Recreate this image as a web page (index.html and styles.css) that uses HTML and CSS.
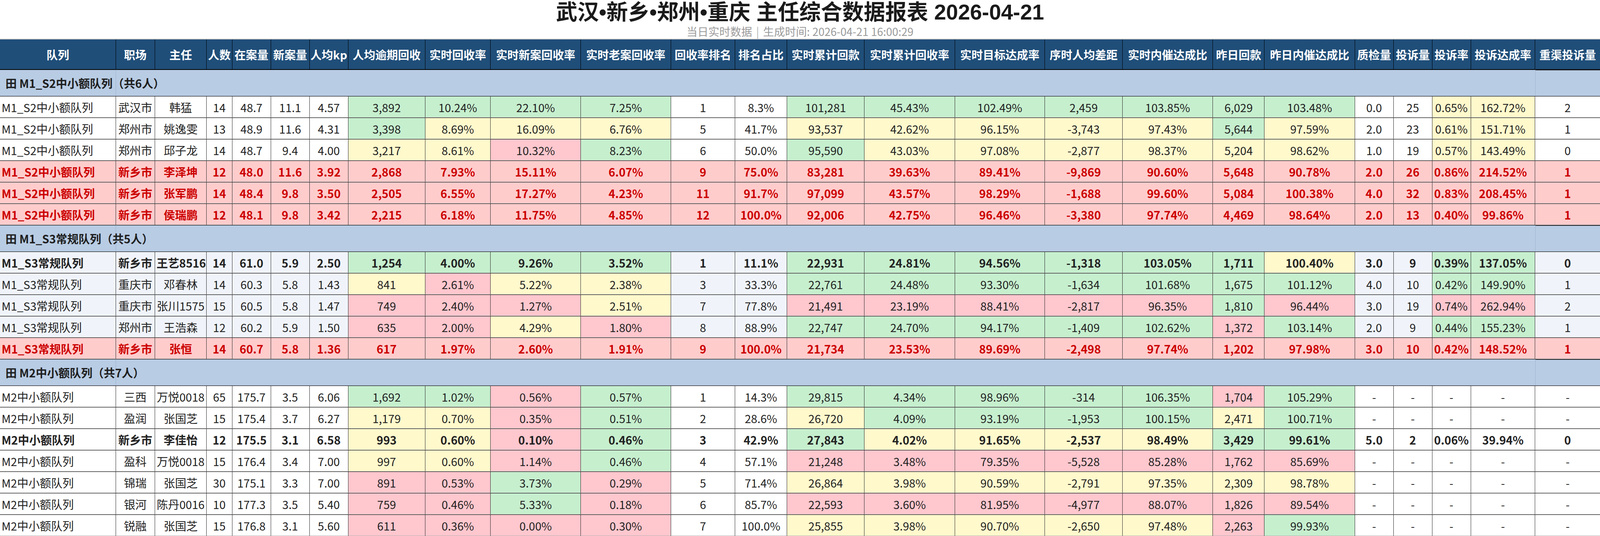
FILE: index.html
```html
<!DOCTYPE html>
<html lang="zh-CN">
<head>
<meta charset="utf-8">
<title>主任综合数据报表</title>
<link rel="stylesheet" href="styles.css">
</head>
<body>
<header class="report-head">
  <h1 class="title">武汉•新乡•郑州•重庆 主任综合数据报表 2026-04-21</h1>
  <div class="subtitle">当日实时数据 <span class="sep">|</span> 生成时间: 2026-04-21 16:00:29</div>
</header>
<table class="tbl">
  <colgroup>
    <col class="w348"><col class="w117"><col class="w155"><col class="w77"><col class="w116"><col class="w116"><col class="w116"><col class="w231"><col class="w196"><col class="w271"><col class="w270"><col class="w193"><col class="w155"><col class="w233"><col class="w271"><col class="w270"><col class="w233"><col class="w271"><col class="w155"><col class="w271"><col class="w116"><col class="w116"><col class="w116"><col class="w193"><col class="w194">
  </colgroup>
  <thead>
    <tr>
      <th>队列</th><th>职场</th><th>主任</th><th>人数</th><th>在案量</th><th>新案量</th><th>人均kp</th><th>人均逾期回收</th><th>实时回收率</th><th>实时新案回收率</th><th>实时老案回收率</th><th>回收率排名</th><th>排名占比</th><th>实时累计回款</th><th>实时累计回收率</th><th>实时目标达成率</th><th>序时人均差距</th><th>实时内催达成比</th><th>昨日回款</th><th>昨日内催达成比</th><th>质检量</th><th>投诉量</th><th>投诉率</th><th>投诉达成率</th><th>重渠投诉量</th>
    </tr>
  </thead>
  <tbody>
    <tr class="grp"><td class="gl">田 M1_S2中小额队列（共6人）</td><td colspan="23"></td><td class="gr"></td></tr>
    <tr>
      <td class="q">M1_S2中小额队列</td><td>武汉市</td><td>韩猛</td><td>14</td><td>48.7</td><td>11.1</td><td>4.57</td><td class="g">3,892</td><td class="g">10.24%</td><td class="g">22.10%</td><td class="g">7.25%</td><td>1</td><td>8.3%</td><td class="g">101,281</td><td class="g">45.43%</td><td class="g">102.49%</td><td class="g">2,459</td><td class="g">103.85%</td><td class="g">6,029</td><td class="g">103.48%</td><td>0.0</td><td>25</td><td class="y">0.65%</td><td class="y">162.72%</td><td>2</td>
    </tr>
    <tr>
      <td class="q">M1_S2中小额队列</td><td>郑州市</td><td>姚逸雯</td><td>13</td><td>48.9</td><td>11.6</td><td>4.31</td><td class="g">3,398</td><td class="y">8.69%</td><td class="y">16.09%</td><td class="y">6.76%</td><td>5</td><td>41.7%</td><td class="y">93,537</td><td class="y">42.62%</td><td class="y">96.15%</td><td class="y">-3,743</td><td class="y">97.43%</td><td class="g">5,644</td><td class="y">97.59%</td><td>2.0</td><td>23</td><td class="y">0.61%</td><td class="y">151.71%</td><td>1</td>
    </tr>
    <tr>
      <td class="q">M1_S2中小额队列</td><td>郑州市</td><td>邱子龙</td><td>14</td><td>48.7</td><td>9.4</td><td>4.00</td><td class="y">3,217</td><td class="y">8.61%</td><td class="p">10.32%</td><td class="g">8.23%</td><td>6</td><td>50.0%</td><td class="g">95,590</td><td class="y">43.03%</td><td class="y">97.08%</td><td class="y">-2,877</td><td class="y">98.37%</td><td class="y">5,204</td><td class="y">98.62%</td><td>1.0</td><td>19</td><td class="y">0.57%</td><td class="y">143.49%</td><td>0</td>
    </tr>
    <tr class="red">
      <td class="q">M1_S2中小额队列</td><td>新乡市</td><td>李泽坤</td><td>12</td><td>48.0</td><td>11.6</td><td>3.92</td><td>2,868</td><td>7.93%</td><td>15.11%</td><td>6.07%</td><td>9</td><td>75.0%</td><td>83,281</td><td>39.63%</td><td>89.41%</td><td>-9,869</td><td>90.60%</td><td>5,648</td><td>90.78%</td><td>2.0</td><td>26</td><td>0.86%</td><td>214.52%</td><td>1</td>
    </tr>
    <tr class="red">
      <td class="q">M1_S2中小额队列</td><td>新乡市</td><td>张军鹏</td><td>14</td><td>48.4</td><td>9.8</td><td>3.50</td><td>2,505</td><td>6.55%</td><td>17.27%</td><td>4.23%</td><td>11</td><td>91.7%</td><td>97,099</td><td>43.57%</td><td>98.29%</td><td>-1,688</td><td>99.60%</td><td>5,084</td><td>100.38%</td><td>4.0</td><td>32</td><td>0.83%</td><td>208.45%</td><td>1</td>
    </tr>
    <tr class="red">
      <td class="q">M1_S2中小额队列</td><td>新乡市</td><td>侯瑞鹏</td><td>12</td><td>48.1</td><td>9.8</td><td>3.42</td><td>2,215</td><td>6.18%</td><td>11.75%</td><td>4.85%</td><td>12</td><td>100.0%</td><td>92,006</td><td>42.75%</td><td>96.46%</td><td>-3,380</td><td>97.74%</td><td>4,469</td><td>98.64%</td><td>2.0</td><td>13</td><td>0.40%</td><td>99.86%</td><td>1</td>
    </tr>

    <tr class="grp"><td class="gl">田 M1_S3常规队列（共5人）</td><td colspan="23"></td><td class="gr"></td></tr>
    <tr class="alt b">
      <td class="q">M1_S3常规队列</td><td>新乡市</td><td>王艺8516</td><td>14</td><td>61.0</td><td>5.9</td><td>2.50</td><td class="g">1,254</td><td class="g">4.00%</td><td class="g">9.26%</td><td class="g">3.52%</td><td>1</td><td>11.1%</td><td class="g">22,931</td><td class="g">24.81%</td><td class="g">94.56%</td><td class="g">-1,318</td><td class="g">103.05%</td><td class="g">1,711</td><td class="y">100.40%</td><td>3.0</td><td>9</td><td class="g">0.39%</td><td class="g">137.05%</td><td>0</td>
    </tr>
    <tr class="alt">
      <td class="q">M1_S3常规队列</td><td>重庆市</td><td>邓春林</td><td>14</td><td>60.3</td><td>5.8</td><td>1.43</td><td class="y">841</td><td class="p">2.61%</td><td class="y">5.22%</td><td class="y">2.38%</td><td>3</td><td>33.3%</td><td class="g">22,761</td><td class="g">24.48%</td><td class="g">93.30%</td><td class="g">-1,634</td><td class="g">101.68%</td><td class="g">1,675</td><td class="g">101.12%</td><td>4.0</td><td>10</td><td class="g">0.42%</td><td class="g">149.90%</td><td>1</td>
    </tr>
    <tr class="alt">
      <td class="q">M1_S3常规队列</td><td>重庆市</td><td>张川1575</td><td>15</td><td>60.5</td><td>5.8</td><td>1.47</td><td class="p">749</td><td class="p">2.40%</td><td class="p">1.27%</td><td class="y">2.51%</td><td>7</td><td>77.8%</td><td class="p">21,491</td><td class="p">23.19%</td><td class="p">88.41%</td><td class="p">-2,817</td><td class="p">96.35%</td><td class="g">1,810</td><td class="p">96.44%</td><td>3.0</td><td>19</td><td class="p">0.74%</td><td class="p">262.94%</td><td>2</td>
    </tr>
    <tr class="alt">
      <td class="q">M1_S3常规队列</td><td>郑州市</td><td>王浩森</td><td>12</td><td>60.2</td><td>5.9</td><td>1.50</td><td class="p">635</td><td class="p">2.00%</td><td class="y">4.29%</td><td class="p">1.80%</td><td>8</td><td>88.9%</td><td class="g">22,747</td><td class="g">24.70%</td><td class="g">94.17%</td><td class="g">-1,409</td><td class="g">102.62%</td><td class="p">1,372</td><td class="g">103.14%</td><td>2.0</td><td>9</td><td class="g">0.44%</td><td class="g">155.23%</td><td>1</td>
    </tr>
    <tr class="red">
      <td class="q">M1_S3常规队列</td><td>新乡市</td><td>张恒</td><td>14</td><td>60.7</td><td>5.8</td><td>1.36</td><td>617</td><td>1.97%</td><td>2.60%</td><td>1.91%</td><td>9</td><td>100.0%</td><td>21,734</td><td>23.53%</td><td>89.69%</td><td>-2,498</td><td>97.74%</td><td>1,202</td><td>97.98%</td><td>3.0</td><td>10</td><td>0.42%</td><td>148.52%</td><td>1</td>
    </tr>

    <tr class="grp"><td class="gl">田 M2中小额队列（共7人）</td><td colspan="23"></td><td class="gr"></td></tr>
    <tr>
      <td class="q">M2中小额队列</td><td>三西</td><td>万悦0018</td><td>65</td><td>175.7</td><td>3.5</td><td>6.06</td><td class="g">1,692</td><td class="g">1.02%</td><td class="p">0.56%</td><td class="g">0.57%</td><td>1</td><td>14.3%</td><td class="g">29,815</td><td class="g">4.34%</td><td class="g">98.96%</td><td class="g">-314</td><td class="g">106.35%</td><td class="p">1,704</td><td class="g">105.29%</td><td>-</td><td>-</td><td>-</td><td>-</td><td>-</td>
    </tr>
    <tr>
      <td class="q">M2中小额队列</td><td>盈润</td><td>张国芝</td><td>15</td><td>175.4</td><td>3.7</td><td>6.27</td><td class="y">1,179</td><td class="y">0.70%</td><td class="p">0.35%</td><td class="g">0.51%</td><td>2</td><td>28.6%</td><td class="y">26,720</td><td class="g">4.09%</td><td class="g">93.19%</td><td class="g">-1,953</td><td class="g">100.15%</td><td class="y">2,471</td><td class="g">100.71%</td><td>-</td><td>-</td><td>-</td><td>-</td><td>-</td>
    </tr>
    <tr class="b">
      <td class="q">M2中小额队列</td><td>新乡市</td><td>李佳怡</td><td>12</td><td>175.5</td><td>3.1</td><td>6.58</td><td class="y">993</td><td class="y">0.60%</td><td class="p">0.10%</td><td class="g">0.46%</td><td>3</td><td>42.9%</td><td class="g">27,843</td><td class="y">4.02%</td><td class="y">91.65%</td><td class="y">-2,537</td><td class="y">98.49%</td><td class="g">3,429</td><td class="g">99.61%</td><td>5.0</td><td>2</td><td>0.06%</td><td>39.94%</td><td>0</td>
    </tr>
    <tr>
      <td class="q">M2中小额队列</td><td>盈科</td><td>万悦0018</td><td>15</td><td>176.4</td><td>3.4</td><td>7.00</td><td class="y">997</td><td class="y">0.60%</td><td class="p">1.14%</td><td class="g">0.46%</td><td>4</td><td>57.1%</td><td class="p">21,248</td><td class="p">3.48%</td><td class="p">79.35%</td><td class="p">-5,528</td><td class="p">85.28%</td><td class="p">1,762</td><td class="p">85.69%</td><td>-</td><td>-</td><td>-</td><td>-</td><td>-</td>
    </tr>
    <tr>
      <td class="q">M2中小额队列</td><td>锦瑞</td><td>张国芝</td><td>30</td><td>175.1</td><td>3.3</td><td>7.00</td><td class="p">891</td><td class="p">0.53%</td><td class="g">3.73%</td><td class="p">0.29%</td><td>5</td><td>71.4%</td><td class="y">26,864</td><td class="y">3.98%</td><td class="y">90.59%</td><td class="y">-2,791</td><td class="y">97.35%</td><td class="y">2,309</td><td class="y">98.78%</td><td>-</td><td>-</td><td>-</td><td>-</td><td>-</td>
    </tr>
    <tr>
      <td class="q">M2中小额队列</td><td>银河</td><td>陈丹0016</td><td>10</td><td>177.3</td><td>3.5</td><td>5.40</td><td class="p">759</td><td class="p">0.46%</td><td class="g">5.33%</td><td class="p">0.18%</td><td>6</td><td>85.7%</td><td class="p">22,593</td><td class="p">3.60%</td><td class="p">81.95%</td><td class="p">-4,977</td><td class="p">88.07%</td><td class="p">1,826</td><td class="p">89.54%</td><td>-</td><td>-</td><td>-</td><td>-</td><td>-</td>
    </tr>
    <tr>
      <td class="q">M2中小额队列</td><td>锐融</td><td>张国芝</td><td>15</td><td>176.8</td><td>3.1</td><td>5.60</td><td class="p">611</td><td class="p">0.36%</td><td class="p">0.00%</td><td class="p">0.30%</td><td>7</td><td>100.0%</td><td class="y">25,855</td><td class="y">3.98%</td><td class="y">90.70%</td><td class="y">-2,650</td><td class="y">97.48%</td><td class="p">2,263</td><td class="g">99.93%</td><td>-</td><td>-</td><td>-</td><td>-</td><td>-</td>
    </tr>
  </tbody>
</table>
</body>
</html>
```
FILE: styles.css
```css
* { box-sizing: border-box; }
html, body { margin: 0; padding: 0; background: #fff; }
body {
  font-family: "Noto Sans CJK SC", "Noto Sans", sans-serif;
  color: #222;
}
.report-head { height: 99px; text-align: center; }
.title {
  margin: 0;
  font-family: "Liberation Sans", "Noto Sans CJK SC", sans-serif;
  font-size: 55px;
  line-height: 62px;
  font-weight: 700;
  color: #1a1a1a;
}
.subtitle { font-size: 28px; line-height: 37px; color: #9a9a9a; }
.sep { color: #b5b5b5; margin: 0 4px; }

.tbl {
  width: 100%;
  table-layout: fixed;
  border-collapse: separate;
  border-spacing: 0;
  border-top: 2px solid #c8c8c8;
  font-size: 29px;
}
.w348 { width: 7.25%; }
.w117 { width: 2.4375%; }
.w155 { width: 3.2292%; }
.w77 { width: 1.6042%; }
.w116 { width: 2.4167%; }
.w231 { width: 4.8125%; }
.w196 { width: 4.0833%; }
.w271 { width: 5.6458%; }
.w270 { width: 5.625%; }
.w193 { width: 4.0208%; }
.w233 { width: 4.8542%; }
.w194 { width: 4.0417%; }

.tbl thead tr { height: 77px; }
.tbl th {
  background: #1f4e79;
  color: #fff;
  font-weight: 700;
  padding: 0;
  white-space: nowrap;
  border-right: 1px solid #000;
  border-bottom: 1px solid #000;
}
.tbl th:last-child { border-right: none; }

.tbl tbody tr { height: 55px; }
.tbl td {
  padding: 0 4px;
  text-align: center;
  white-space: nowrap;
  background: #fff;
  border-right: 1px solid #2a2a2a;
  border-top: 1px solid #1a1a1a;
  border-bottom: 1px solid #b0b0b0;
}
.tbl td:last-child { border-right: none; }
.tbl td.q { text-align: left; padding-left: 4px; }

.tbl tr.grp { height: 68px; }
.tbl tr.grp td {
  background: #b8cce4;
  border-right: none;
  border-top: 1px solid #000;
  border-bottom: 1px solid #8f9fb3;
}
.tbl tr.grp td.gl {
  text-align: left;
  padding-left: 14px;
  font-weight: 700;
  overflow: visible;
  color: #1e1e1e;
  border-right: 1px solid #9fb4cf;
}
.tbl tr.grp td.gr { border-left: 1px solid #9fb4cf; border-top: 2px solid #222; }

.tbl .alt td { background: #f0f4fa; }
.tbl .b td { font-weight: 700; }

.tbl td.g { background: #c6efce; }
.tbl td.y { background: #fff9cc; }
.tbl td.p { background: #ffc7ce; }

.tbl .red td { background: #ffcccc; color: #cc0000; font-weight: 700; }
```
